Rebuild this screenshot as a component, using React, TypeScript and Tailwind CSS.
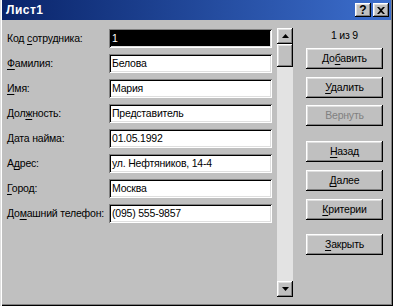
import React from "react";

const raised =
  "shadow-[inset_-1px_-1px_0_#000,inset_1px_1px_0_#fff,inset_-2px_-2px_0_#808080,inset_2px_2px_0_#dfdfdf]";
const sunken =
  "shadow-[inset_1px_1px_0_#808080,inset_-1px_-1px_0_#fff,inset_2px_2px_0_#000,inset_-2px_-2px_0_#dfdfdf]";

function Acc({ text, i }: { text: string; i: number }) {
  if (i < 0) return <>{text}</>;
  return (
    <>
      {text.slice(0, i)}
      <span className="underline underline-offset-[2px]">{text[i]}</span>
      {text.slice(i + 1)}
    </>
  );
}

const rows: { label: string; u: number; value: string }[] = [
  { label: "Код сотрудника:", u: 4, value: "1" },
  { label: "Фамилия:", u: 0, value: "Белова" },
  { label: "Имя:", u: 0, value: "Мария" },
  { label: "Должность:", u: 3, value: "Представитель" },
  { label: "Дата найма:", u: -1, value: "01.05.1992" },
  { label: "Адрес:", u: 1, value: "ул. Нефтяников, 14-4" },
  { label: "Город:", u: 0, value: "Москва" },
  { label: "Домашний телефон:", u: 2, value: "(095) 555-9857" },
];

function Btn({ text, u, disabled, className = "" }: { text: string; u: number; disabled?: boolean; className?: string }) {
  return (
    <div
      className={`w-[77px] h-[21px] flex items-center justify-center bg-[#c0c0c0] ${raised} ${
        disabled ? "text-[#808080]" : "text-black"
      } ${className}`}
    >
      <span className="leading-none">
        <Acc text={text} i={u} />
      </span>
    </div>
  );
}

export default function App() {
  return (
    <div
      className="w-[393px] h-[306px] bg-[#c0c0c0] flex flex-col text-[10.5px] tracking-[-0.2px] text-black shadow-[inset_1px_0_0_#dfdfdf,inset_2px_0_0_#fff,inset_-1px_-1px_0_#000,inset_-2px_-2px_0_#808080] overflow-hidden"
      style={{ fontFamily: '"Liberation Sans", Arial, sans-serif' }}
    >
      {/* Title bar */}
      <div className="h-[20px] mx-[2px] flex items-center justify-between bg-gradient-to-r from-[#0a246a] to-[#3d6fce] pl-[4px] pr-[2px]">
        <span className="text-white font-bold text-[12px] leading-none tracking-[0.5px]">Лист1</span>
        <div className="flex gap-[2px]">
          <div className={`w-[16px] h-[14px] bg-[#c0c0c0] ${raised} flex items-center justify-center font-bold text-[12px] leading-none tracking-normal`}>?</div>
          <div className={`w-[16px] h-[14px] bg-[#c0c0c0] ${raised} flex items-center justify-center`}>
            <svg width="8" height="7" viewBox="0 0 8 7">
              <path d="M0 0h2l2 2 2-2h2L5 3.5 8 7H6L4 5 2 7H0l3-3.5z" fill="#000" />
            </svg>
          </div>
        </div>
      </div>

      {/* Body */}
      <div className="flex flex-1 pl-[7px] pt-[8px] pb-[9px]">
        <div className="flex flex-col gap-[6px] pt-[1px]">
          {rows.map((r, idx) => (
            <div key={idx} className="flex items-center h-[19px]">
              <div className="w-[102px] whitespace-nowrap">
                <Acc text={r.label} i={r.u} />
              </div>
              <div
                className={`w-[163px] h-[19px] flex items-center pl-[3px] whitespace-nowrap overflow-hidden ${sunken} ${
                  idx === 0 ? "bg-black" : "bg-white"
                }`}
              >
                {idx === 0 ? (
                  <span className="bg-black text-white">{r.value}</span>
                ) : (
                  <span>{r.value}</span>
                )}
              </div>
            </div>
          ))}
        </div>

        {/* Scrollbar */}
        <div className="ml-[5px] w-[16px] flex flex-col bg-[#e3e3e3]">
          <div className={`h-[16px] bg-[#c0c0c0] ${raised} flex items-center justify-center`}>
            <svg width="7" height="4" viewBox="0 0 7 4">
              <path d="M3.5 0L7 4H0z" fill="#000" />
            </svg>
          </div>
          <div className={`h-[23px] bg-[#c0c0c0] ${raised}`} />
          <div className="flex-1" />
          <div className={`h-[16px] bg-[#c0c0c0] ${raised} flex items-center justify-center`}>
            <svg width="7" height="4" viewBox="0 0 7 4">
              <path d="M0 0h7L3.5 4z" fill="#000" />
            </svg>
          </div>
        </div>

        {/* Right panel */}
        <div className="ml-[13px] flex flex-col items-center w-[77px]">
          <div className="h-[11px] mt-[2px] leading-none">1 из 9</div>
          <Btn text="Добавить" u={2} className="mt-[7px]" />
          <Btn text="Удалить" u={0} className="mt-[8px]" />
          <Btn text="Вернуть" u={-1} disabled className="mt-[7px]" />
          <Btn text="Назад" u={0} className="mt-[15px]" />
          <Btn text="Далее" u={0} className="mt-[8px]" />
          <Btn text="Критерии" u={0} className="mt-[8px]" />
          <Btn text="Закрыть" u={0} className="mt-[14px]" />
        </div>
      </div>
    </div>
  );
}
